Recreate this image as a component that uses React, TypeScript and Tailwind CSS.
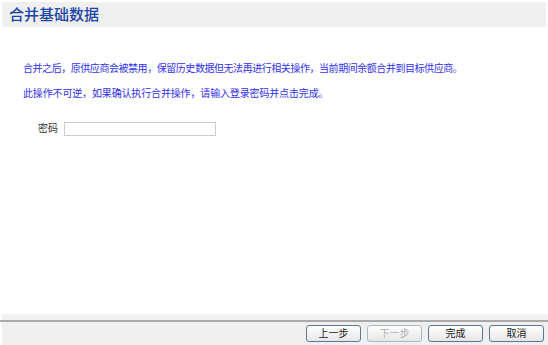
import React from 'react';

const font = { fontFamily: '"Liberation Sans", "Noto Sans CJK SC", sans-serif' };

const WizardButton = ({ label, disabled }: { label: string; disabled?: boolean }) => (
  <button
    disabled={disabled}
    className={`w-[55px] h-[17px] rounded-[3px] border text-[10px] leading-none flex items-center justify-center bg-gradient-to-b from-white to-[#e6e6e6] ${
      disabled ? 'border-[#a9b8c8] text-[#b0b0b0]' : 'border-[#5a7897] text-[#222]'
    }`}
  >
    {label}
  </button>
);

export default function App() {
  return (
    <div className="w-[548px] h-[345px] bg-white flex flex-col overflow-hidden" style={font}>
      <div className="mx-[2px] mt-[2px] h-[25px] bg-[#efefef] flex items-center pl-[7px]">
        <h1 className="text-[15px] leading-none text-[#1a44a8] font-medium">合并基础数据</h1>
      </div>

      <div className="flex-1 px-[23px] pt-[37px] text-[10px] leading-none">
        <p className="text-[#3030ee] tracking-[-0.45px]">
          合并之后，原供应商会被禁用，保留历史数据但无法再进行相关操作，当前期间余额合并到目标供应商。
        </p>
        <p className="text-[#3030ee] tracking-[-0.15px] mt-[15px]">
          此操作不可逆，如果确认执行合并操作，请输入登录密码并点击完成。
        </p>

        <div className="flex items-center mt-[23px] pl-[15px] gap-[6px]">
          <label className="text-[#333] text-[10px]">密码</label>
          <input
            type="password"
            className="w-[152px] h-[14px] border border-[#c9cdd1] bg-white outline-none"
          />
        </div>
      </div>

      <div className="ml-[2px] h-[6px] bg-[#f1f1f1]" />
      <div className="h-[2px] bg-[#a9a9a9]" />
      <div className="ml-[2px] h-[23px] bg-[#efefef] flex items-center justify-end gap-[6px] pr-[4px]">
        <WizardButton label="上一步" />
        <WizardButton label="下一步" disabled />
        <WizardButton label="完成" />
        <WizardButton label="取消" />
      </div>
    </div>
  );
}
